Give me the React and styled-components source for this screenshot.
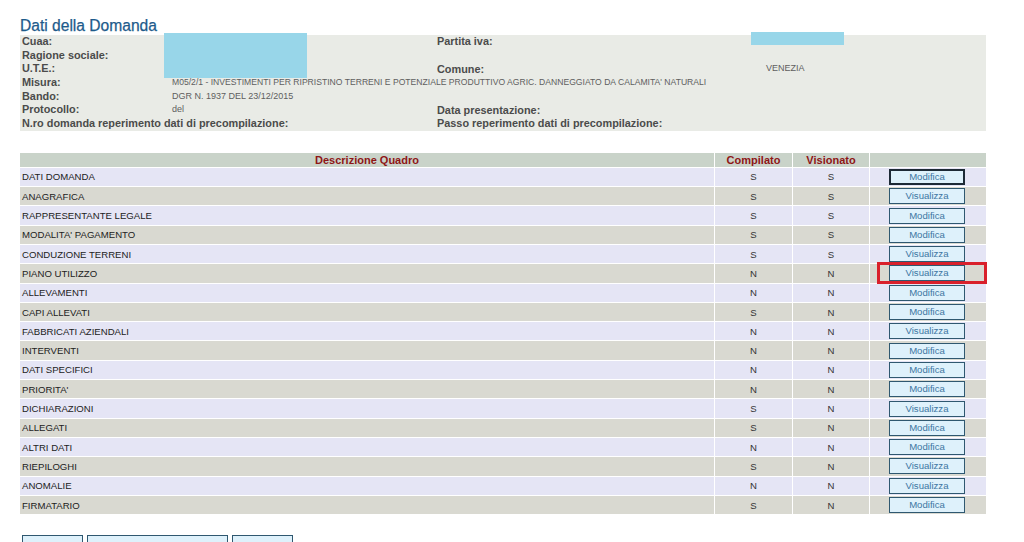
import React from "react";
import styled, { createGlobalStyle } from "styled-components";

const GlobalStyle = createGlobalStyle`
  html, body {
    margin: 0;
    padding: 0;
    background: #ffffff;
    overflow: hidden;
  }
  body {
    font-family: "Liberation Sans", Arial, sans-serif;
  }
`;

const rows = [
  { name: "DATI DOMANDA", comp: "S", vis: "S", action: "Modifica", focused: true },
  { name: "ANAGRAFICA", comp: "S", vis: "S", action: "Visualizza" },
  { name: "RAPPRESENTANTE LEGALE", comp: "S", vis: "S", action: "Modifica" },
  { name: "MODALITA' PAGAMENTO", comp: "S", vis: "S", action: "Modifica" },
  { name: "CONDUZIONE TERRENI", comp: "S", vis: "S", action: "Visualizza" },
  { name: "PIANO UTILIZZO", comp: "N", vis: "N", action: "Visualizza", marked: true },
  { name: "ALLEVAMENTI", comp: "N", vis: "N", action: "Modifica" },
  { name: "CAPI ALLEVATI", comp: "S", vis: "N", action: "Modifica" },
  { name: "FABBRICATI AZIENDALI", comp: "N", vis: "N", action: "Visualizza" },
  { name: "INTERVENTI", comp: "N", vis: "N", action: "Modifica" },
  { name: "DATI SPECIFICI", comp: "N", vis: "N", action: "Modifica" },
  { name: "PRIORITA'", comp: "N", vis: "N", action: "Modifica" },
  { name: "DICHIARAZIONI", comp: "S", vis: "N", action: "Visualizza" },
  { name: "ALLEGATI", comp: "S", vis: "N", action: "Modifica" },
  { name: "ALTRI DATI", comp: "N", vis: "N", action: "Modifica" },
  { name: "RIEPILOGHI", comp: "S", vis: "N", action: "Visualizza" },
  { name: "ANOMALIE", comp: "N", vis: "N", action: "Visualizza" },
  { name: "FIRMATARIO", comp: "S", vis: "N", action: "Modifica" },
];

const App = () => {
  return (
    <>
      <GlobalStyle />
      <Page>
        <Title>Dati della Domanda</Title>
        <InfoBox>
          <Label>Cuaa:</Label>
          <Value />
          <Label>Partita iva:</Label>
          <Value />

          <Label>Ragione sociale:</Label>
          <Value />
          <Value />
          <Value />

          <Label>U.T.E.:</Label>
          <Value />
          <Label $shift>Comune:</Label>
          <Value>VENEZIA</Value>

          <Label>Misura:</Label>
          <Value $span={3} $small>
            M05/2/1 - INVESTIMENTI PER RIPRISTINO TERRENI E POTENZIALE PRODUTTIVO AGRIC. DANNEGGIATO DA CALAMITA' NATURALI
          </Value>

          <Label>Bando:</Label>
          <Value $span={3}>DGR N. 1937 DEL 23/12/2015</Value>

          <Label>Protocollo:</Label>
          <Value>del</Value>
          <Label $shift>Data presentazione:</Label>
          <Value />

          <Label $span={2}>N.ro domanda reperimento dati di precompilazione:</Label>
          <Label>Passo reperimento dati di precompilazione:</Label>
          <Value />

          <Redaction $left={144} $top={-2} $width={143} $height={45} />
          <Redaction $left={731} $top={-3} $width={93} $height={13} />
        </InfoBox>

        <Quadri>
          <thead>
            <tr>
              <HeadCell $w={694}>Descrizione Quadro</HeadCell>
              <HeadCell $w={77}>Compilato</HeadCell>
              <HeadCell $w={76}>Visionato</HeadCell>
              <HeadCell />
            </tr>
          </thead>
          <tbody>
            {rows.map((r, i) => (
              <Row key={r.name} $alt={i % 2 === 1}>
                <NameCell>{r.name}</NameCell>
                <FlagCell>{r.comp}</FlagCell>
                <FlagCell>{r.vis}</FlagCell>
                <ActionCell>
                  <ActionButton $focused={r.focused}>{r.action}</ActionButton>
                  {r.marked && <Marker />}
                </ActionCell>
              </Row>
            ))}
          </tbody>
        </Quadri>

        <Toolbar>
          <BottomButton $w={61} />
          <BottomButton $w={141} />
          <BottomButton $w={61} />
        </Toolbar>
      </Page>
    </>
  );
};

const Page = styled.div`
  padding: 17px 38px 0 20px;
  width: 966px;
`;

const Title = styled.h1`
  margin: 0;
  font-size: 15.6px;
  line-height: 18px;
  font-weight: normal;
  color: #1d5b8b;
  -webkit-text-stroke: 0.25px #1d5b8b;
`;

const InfoBox = styled.div`
  position: relative;
  display: grid;
  grid-template-columns: 150px 265px 329px 1fr;
  grid-auto-rows: 13.7px;
  background: #e9ebe6;
  padding-left: 2px;
`;

const Label = styled.div`
  grid-column: span ${(p) => p.$span || 1};
  font-size: 11.5px;
  line-height: 13.7px;
  font-weight: bold;
  color: #4b4b4b;
  white-space: nowrap;
  transform: scaleX(0.945);
  transform-origin: left center;
  margin-top: ${(p) => (p.$shift ? "1px" : "0")};
`;

const Value = styled.div`
  grid-column: span ${(p) => p.$span || 1};
  font-size: ${(p) => (p.$small ? "8.6px" : "9px")};
  line-height: 13.7px;
  color: #5e5e5e;
  white-space: nowrap;
`;

const Redaction = styled.div`
  position: absolute;
  left: ${(p) => p.$left}px;
  top: ${(p) => p.$top}px;
  width: ${(p) => p.$width}px;
  height: ${(p) => p.$height}px;
  background: #98d6e9;
`;

const Quadri = styled.table`
  margin-top: 21px;
  width: 968px;
  margin-left: -1px;
  border-collapse: separate;
  border-spacing: 1px;
  table-layout: fixed;
`;

const HeadCell = styled.th`
  ${(p) => (p.$w ? `width: ${p.$w}px;` : "")}
  height: 14px;
  padding: 0;
  background: #c9d3c9;
  color: #8e1616;
  font-size: 11px;
  line-height: 14px;
  font-weight: bold;
  text-align: center;
`;

const Row = styled.tr`
  background: ${(p) => (p.$alt ? "#d9d9d1" : "#e5e5f5")};
`;

const NameCell = styled.td`
  height: 18.3px;
  padding: 0 0 0 2px;
  font-size: 9.6px;
  color: #222;
  white-space: nowrap;
`;

const FlagCell = styled.td`
  padding: 0;
  font-size: 9.6px;
  color: #333;
  text-align: center;
`;

const ActionCell = styled.td`
  position: relative;
  padding: 0;
`;

const ActionButton = styled.div`
  box-sizing: border-box;
  margin-left: 19px;
  width: 76px;
  height: 16px;
  border: ${(p) => (p.$focused ? "2px solid #1d2a36" : "1px solid #2f5870")};
  background: #def1fb;
  color: #3d76a2;
  font-size: 9.6px;
  line-height: ${(p) => (p.$focused ? "12px" : "14px")};
  text-align: center;
`;

const Marker = styled.div`
  position: absolute;
  left: 7px;
  right: -1px;
  top: -2px;
  bottom: -1px;
  border: 3px solid #d9202b;
`;

const Toolbar = styled.div`
  display: flex;
  gap: 4px;
  margin-top: 20px;
  padding-left: 2px;
`;

const BottomButton = styled.div`
  box-sizing: border-box;
  width: ${(p) => p.$w}px;
  height: 20px;
  border: 1px solid #2f5870;
  background: #def1fb;
`;

export default App;
